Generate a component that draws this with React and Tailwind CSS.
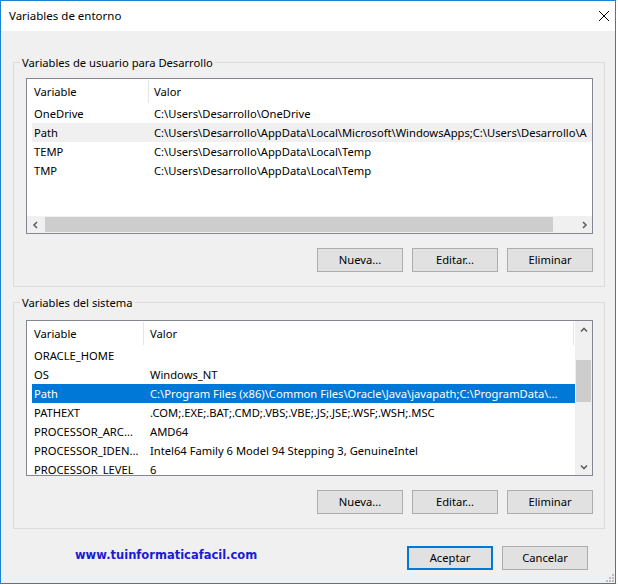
import React from 'react';

const userVars = [
  { name: 'OneDrive', value: 'C:\\Users\\Desarrollo\\OneDrive' },
  { name: 'Path', value: 'C:\\Users\\Desarrollo\\AppData\\Local\\Microsoft\\WindowsApps;C:\\Users\\Desarrollo\\A' },
  { name: 'TEMP', value: 'C:\\Users\\Desarrollo\\AppData\\Local\\Temp' },
  { name: 'TMP', value: 'C:\\Users\\Desarrollo\\AppData\\Local\\Temp' },
];

const systemVars = [
  { name: 'ORACLE_HOME', value: '' },
  { name: 'OS', value: 'Windows_NT' },
  { name: 'Path', value: 'C:\\Program Files (x86)\\Common Files\\Oracle\\Java\\javapath;C:\\ProgramData\\...' },
  { name: 'PATHEXT', value: '.COM;.EXE;.BAT;.CMD;.VBS;.VBE;.JS;.JSE;.WSF;.WSH;.MSC' },
  { name: 'PROCESSOR_ARC...', value: 'AMD64' },
  { name: 'PROCESSOR_IDEN...', value: 'Intel64 Family 6 Model 94 Stepping 3, GenuineIntel' },
  { name: 'PROCESSOR_LEVEL', value: '6' },
];

const Arrow = ({ dir }) => {
  const paths = {
    left: 'M5 1 L2 4 L5 7',
    right: 'M3 1 L6 4 L3 7',
    up: 'M1 5.5 L4 2.5 L7 5.5',
    down: 'M1 2.5 L4 5.5 L7 2.5',
  };
  return (
    <svg width="8" height="8" viewBox="0 0 8 8">
      <path d={paths[dir]} fill="none" stroke="#606060" strokeWidth="1.6" />
    </svg>
  );
};

const Button = ({ children, primary }) => (
  <button
    className={
      primary
        ? 'w-[86px] h-[24px] bg-[#e1e1e1] border-2 border-[#0078d7] text-black leading-[16px]'
        : 'w-[86px] h-[24px] bg-[#e1e1e1] border border-[#adadad] text-black leading-[16px]'
    }
  >
    {children}
  </button>
);

const ButtonRow = () => (
  <div className="flex justify-end gap-[9px] mt-[14px] mr-[11px] mb-[14px]">
    <Button>Nueva...</Button>
    <Button>Editar...</Button>
    <Button>Eliminar</Button>
  </div>
);

const UserList = () => (
  <div className="ml-[12px] w-[567px] h-[156px] border border-[#828790] bg-white flex flex-col overflow-hidden">
    <div className="h-[25px] flex items-center shrink-0">
      <div className="w-[121px] pl-[7px]">Variable</div>
      <div className="w-px h-[23px] bg-[#e5e5e5]" />
      <div className="pl-[5px]">Valor</div>
    </div>
    {userVars.map((row, i) => (
      <div
        key={row.name}
        className={
          i === 1
            ? 'flex h-[19px] items-center ml-[5px] bg-[#f0f0f0] whitespace-nowrap overflow-hidden'
            : 'flex h-[19px] items-center ml-[5px] whitespace-nowrap overflow-hidden'
        }
      >
        <div className="w-[116px] pl-[2px] shrink-0">{row.name}</div>
        <div className="pl-[6px]">{row.value}</div>
      </div>
    ))}
    <div className="flex-1" />
    <div className="h-[17px] bg-[#f0f0f0] flex shrink-0">
      <div className="w-[17px] flex items-center justify-center">
        <Arrow dir="left" />
      </div>
      <div className="flex-1 flex items-center">
        <div className="w-[508px] h-[15px] bg-[#cdcdcd] ml-[1px]" />
      </div>
      <div className="w-[17px] flex items-center justify-center">
        <Arrow dir="right" />
      </div>
    </div>
  </div>
);

const SystemList = () => (
  <div className="ml-[12px] w-[567px] h-[156px] border border-[#828790] bg-white flex overflow-hidden">
    <div className="flex-1 flex flex-col overflow-hidden">
      <div className="h-[25px] flex items-center shrink-0">
        <div className="w-[116px] pl-[7px]">Variable</div>
        <div className="w-px h-[23px] bg-[#e5e5e5]" />
        <div className="flex-1 pl-[6px]">Valor</div>
        <div className="w-px h-[23px] bg-[#e5e5e5] mr-[1px]" />
      </div>
      {systemVars.map((row, i) => (
        <div
          key={row.name}
          className={
            i === 2
              ? 'flex h-[19px] shrink-0 items-center ml-[5px] bg-[#0078d7] text-white whitespace-nowrap overflow-hidden'
              : 'flex h-[19px] shrink-0 items-center ml-[5px] whitespace-nowrap overflow-hidden'
          }
        >
          <div className="w-[111px] pl-[2px] shrink-0">{row.name}</div>
          <div className="pl-[7px]">{row.value}</div>
        </div>
      ))}
    </div>
    <div className="w-[17px] bg-[#f0f0f0] flex flex-col shrink-0">
      <div className="h-[17px] flex items-center justify-center">
        <Arrow dir="up" />
      </div>
      <div className="flex-1">
        <div className="h-[42px] w-[15px] mx-auto mt-[22px] bg-[#cdcdcd]" />
      </div>
      <div className="h-[17px] flex items-center justify-center">
        <Arrow dir="down" />
      </div>
    </div>
  </div>
);

const App = () => {
  return (
    <div className="w-[618px] h-[585px] bg-white font-['Noto_Sans',sans-serif] text-[11.2px] leading-[16px] text-black">
      <div className="relative w-[616px] h-[584px] border border-[#1883d7] bg-[#f0f0f0] flex flex-col">
        <div className="h-[30px] bg-white flex items-center justify-between pl-[8px] pr-[6px] shrink-0">
          <span className="text-[11.5px]">Variables de entorno</span>
          <svg width="10" height="10" viewBox="0 0 10 10">
            <path d="M0 0 L10 10 M10 0 L0 10" stroke="#000" strokeWidth="1" />
          </svg>
        </div>

        <div className="mt-[31px] ml-[12px] w-[592px] border border-[#dcdcdc] flex flex-col">
          <div className="-mt-[8px] ml-[6px] px-[2px] self-start bg-[#f0f0f0]">
            Variables de usuario para Desarrollo
          </div>
          <div className="mt-[7px]">
            <UserList />
          </div>
          <ButtonRow />
        </div>

        <div className="mt-[15px] ml-[12px] w-[592px] border border-[#dcdcdc] flex flex-col">
          <div className="-mt-[8px] ml-[6px] px-[2px] self-start bg-[#f0f0f0]">
            Variables del sistema
          </div>
          <div className="mt-[9px]">
            <SystemList />
          </div>
          <ButtonRow />
        </div>

        <div className="mt-[17px] flex items-start">
          <a className="ml-[74px] mt-[1px] font-['DejaVu_Sans',sans-serif] font-bold text-[11.5px] text-[#1a1ad8]">
            www.tuinformaticafacil.com
          </a>
          <div className="ml-auto mr-[27px] flex gap-[9px]">
            <Button primary>Aceptar</Button>
            <Button>Cancelar</Button>
          </div>
        </div>

        <svg className="absolute right-[1px] bottom-[1px]" width="8" height="8" viewBox="0 0 8 8">
          <rect x="6" y="0" width="2" height="2" fill="#bcbcbc" />
          <rect x="3" y="3" width="2" height="2" fill="#bcbcbc" />
          <rect x="6" y="3" width="2" height="2" fill="#bcbcbc" />
          <rect x="0" y="6" width="2" height="2" fill="#bcbcbc" />
          <rect x="3" y="6" width="2" height="2" fill="#bcbcbc" />
          <rect x="6" y="6" width="2" height="2" fill="#bcbcbc" />
        </svg>
      </div>
    </div>
  );
};

export default App;
